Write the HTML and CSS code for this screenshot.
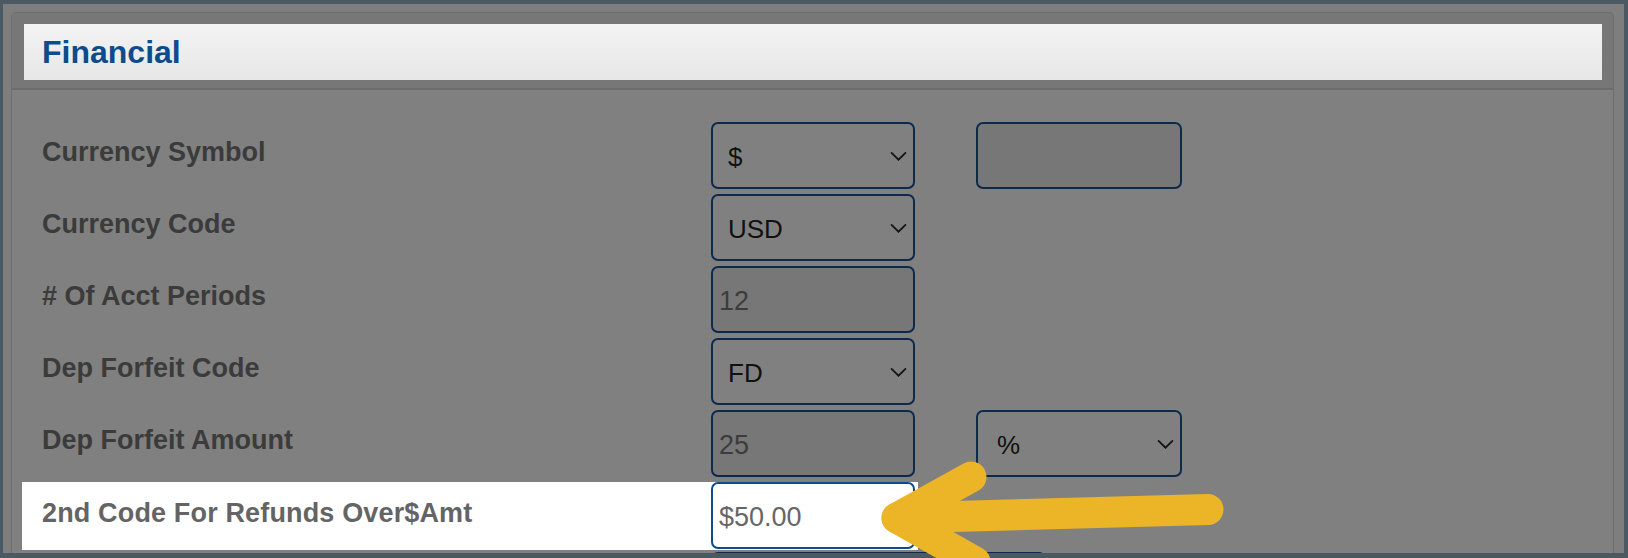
FILE: index.html
```html
<!DOCTYPE html>
<html>
<head>
<meta charset="utf-8">
<link rel="stylesheet" href="styles.css">
</head>
<body>
<div class="frame">
  <div class="panel">
    <div class="panel-head">
      <div class="title-bar">Financial</div>
    </div>
    <div class="panel-body">
      <div class="row">
        <div class="label">Currency Symbol</div>
        <div class="ctl sel"><span>$</span><svg class="chev" viewBox="0 0 16 9"><polyline points="1,1 8,8 15,1"/></svg></div>
        <div class="ctl inp col2"></div>
      </div>
      <div class="row">
        <div class="label">Currency Code</div>
        <div class="ctl sel"><span>USD</span><svg class="chev" viewBox="0 0 16 9"><polyline points="1,1 8,8 15,1"/></svg></div>
      </div>
      <div class="row">
        <div class="label"># Of Acct Periods</div>
        <div class="ctl inp">12</div>
      </div>
      <div class="row">
        <div class="label">Dep Forfeit Code</div>
        <div class="ctl sel"><span>FD</span><svg class="chev" viewBox="0 0 16 9"><polyline points="1,1 8,8 15,1"/></svg></div>
      </div>
      <div class="row">
        <div class="label">Dep Forfeit Amount</div>
        <div class="ctl inp">25</div>
        <div class="ctl sel col2 wide-pad"><span>%</span><svg class="chev" viewBox="0 0 16 9"><polyline points="1,1 8,8 15,1"/></svg></div>
      </div>
      <div class="row hl">
        <div class="label">2nd Code For Refunds Over$Amt</div>
        <div class="ctl inp">$50.00</div>
      </div>
      <div class="row next">
        <div class="label"></div>
        <div class="ctl inp long"></div>
      </div>
    </div>
  </div>
</div>
<svg class="arrow" width="1628" height="558" viewBox="0 0 1628 558">
  <g fill="none" stroke="#ecb528" stroke-width="31" stroke-linecap="round" stroke-linejoin="round">
    <line x1="897" y1="518" x2="1208" y2="509.5"/>
    <polyline points="971,477 897,518 975,562"/>
  </g>
</svg>
</body>
</html>
```
FILE: styles.css
```css
html, body {
  margin: 0;
  padding: 0;
}
body {
  background: #4b5963;
  width: 1628px;
  height: 558px;
  overflow: hidden;
  position: relative;
  font-family: "Liberation Sans", Arial, sans-serif;
}
.frame {
  margin: 4px 4px 0 3px;
  height: 549px;
  background: #7e7e7e;
  overflow: hidden;
}
.panel {
  margin: 8px 10px 0 8px;
  border: 1px solid #6d6d6d;
  border-bottom: none;
  border-radius: 5px 5px 0 0;
  overflow: hidden;
}
.panel-head {
  background: #777777;
  padding: 11px 11px 8px 12px;
  border-bottom: 2px solid #6c6c6c;
}
.title-bar {
  height: 56px;
  background: linear-gradient(#f3f3f3, #e7e7e7);
  padding-left: 18px;
  font-weight: 700;
  font-size: 32px;
  line-height: 56px;
  color: #0b4c8c;
}
.panel-body {
  background: #808080;
  padding: 32px 0 40px 10px;
  display: flex;
  flex-direction: column;
  gap: 5px;
}
.row {
  display: flex;
  align-items: center;
  height: 67px;
}
.label {
  flex: none;
  width: 689px;
  box-sizing: border-box;
  padding-left: 20px;
  padding-bottom: 6px;
  font-weight: 700;
  font-size: 27px;
  color: #3b3b3b;
  white-space: nowrap;
}
.ctl {
  flex: none;
  width: 204px;
  height: 67px;
  box-sizing: border-box;
  border: 2px solid #0e2a4a;
  border-radius: 7px;
  display: flex;
  align-items: center;
  padding-top: 4px;
}
.ctl.sel {
  justify-content: space-between;
  padding-left: 15px;
  padding-right: 6px;
  font-size: 26px;
  color: #111;
}
.ctl.sel.wide-pad {
  padding-left: 19px;
}
.ctl.inp {
  padding-left: 6px;
  font-size: 27px;
  color: #3c3c3c;
  background: #777777;
}
.ctl.col2 {
  margin-left: 61px;
  width: 206px;
}
.chev {
  width: 17px;
  height: 10px;
  margin-bottom: 4px;
}
.chev polyline {
  fill: none;
  stroke: #111;
  stroke-width: 1.6;
}
.row.hl {
  background: #ffffff;
  height: 68px;
  width: fit-content;
  padding-right: 3px;
  align-items: flex-start;
}
.row.hl .label {
  align-self: center;
  color: #646464;
  letter-spacing: 0.15px;
}
.row.hl .ctl.inp {
  background: #ffffff;
  border-color: #0f4b8c;
  color: #666666;
}
.row.next {
  margin-top: -3px;
}
.ctl.long {
  width: 335px;
  background: transparent;
}
.arrow {
  position: absolute;
  left: 0;
  top: 0;
  pointer-events: none;
}
```
